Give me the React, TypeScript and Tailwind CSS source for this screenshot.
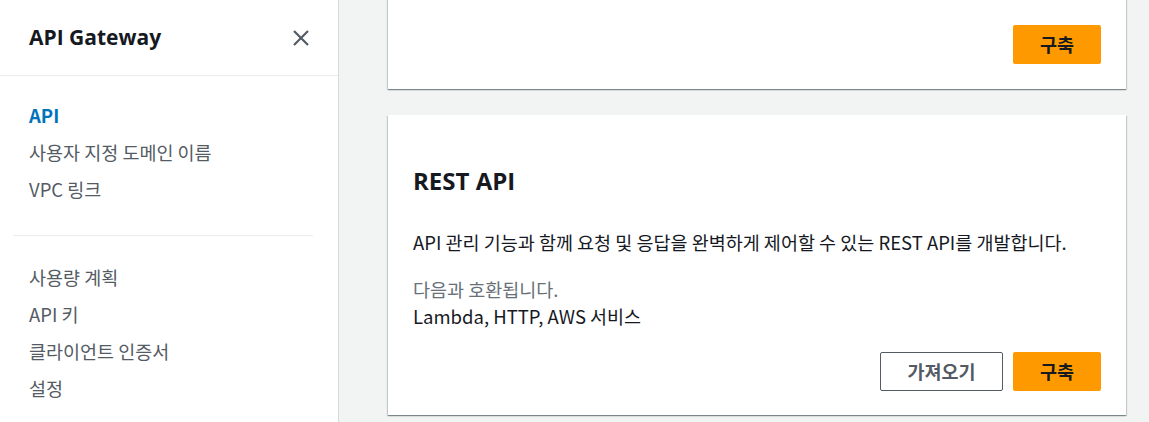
const latin = { fontFamily: '"Open Sans", "Noto Sans CJK KR", sans-serif' };
const kr = { fontFamily: '"Noto Sans CJK KR", "Open Sans", sans-serif' };

const cardShadow =
  "shadow-[0_1px_1px_0_rgba(0,28,36,0.3),1px_1px_1px_0_rgba(0,28,36,0.15),-1px_1px_1px_0_rgba(0,28,36,0.15)]";

function NavItem({ label, active }: { label: string; active?: boolean }) {
  return (
    <a
      href="#"
      style={kr}
      className={
        active
          ? "block h-[37px] leading-[37px] text-[18.5px] font-bold text-[#0073bb]"
          : "block h-[37px] leading-[37px] text-[18.5px] text-[#545b64]"
      }
    >
      {label}
    </a>
  );
}

export default function App() {
  return (
    <div className="flex h-[422px] w-[1149px] overflow-hidden bg-[#f2f3f3]" style={kr}>
      <aside className="w-[339px] shrink-0 border-r border-[#d5dbdb] bg-white">
        <div className="flex h-[76px] items-center justify-between border-b border-[#eaeded] pl-[29px] pr-[28px]">
          <h1 style={latin} className="text-[21px] font-bold text-[#16191f]">
            API Gateway
          </h1>
          <svg width="18" height="18" viewBox="0 0 18 18" className="text-[#545b64]">
            <path d="M2 2 L16 16 M16 2 L2 16" stroke="currentColor" strokeWidth="2.2" />
          </svg>
        </div>
        <nav className="pl-[29px] pt-[21px]">
          <NavItem label="API" active />
          <NavItem label="사용자 지정 도메인 이름" />
          <NavItem label="VPC 링크" />
        </nav>
        <div className="mx-[13px] mt-[27px] mr-[25px] border-t border-[#eaeded]" />
        <nav className="pl-[29px] pt-[23px]">
          <NavItem label="사용량 계획" />
          <NavItem label="API 키" />
          <NavItem label="클라이언트 인증서" />
          <NavItem label="설정" />
        </nav>
      </aside>

      <main className="flex-1 pl-[49px] pr-[23px]">
        <section className={`-mt-[10px] flex h-[99px] items-end justify-end bg-white px-[25px] pb-[25px] ${cardShadow}`}>
          <button className="h-[39px] w-[88px] rounded-[2px] bg-[#ff9900] text-[18.5px] font-bold text-[#16191f]">
            구축
          </button>
        </section>

        <section className={`mt-[26px] bg-white px-[25px] pt-[50px] pb-[24px] ${cardShadow}`}>
          <h2 style={latin} className="text-[24px] leading-[32px] font-bold text-[#16191f]">
            REST API
          </h2>
          <p className="mt-[34px] text-[18.5px] leading-[22px] text-[#16191f]">
            API 관리 기능과 함께 요청 및 응답을 완벽하게 제어할 수 있는 REST API를 개발합니다.
          </p>
          <p className="mt-[25px] text-[18.5px] leading-[22px] text-[#687078]">다음과 호환됩니다.</p>
          <p className="mt-[5px] text-[18.5px] leading-[22px] text-[#16191f]">Lambda, HTTP, AWS 서비스</p>
          <div className="mt-[25px] flex justify-end gap-[10px]">
            <button className="h-[39px] w-[123px] rounded-[2px] border border-[#545b64] bg-white text-[18.5px] font-bold text-[#545b64]">
              가져오기
            </button>
            <button className="h-[39px] w-[88px] rounded-[2px] bg-[#ff9900] text-[18.5px] font-bold text-[#16191f]">
              구축
            </button>
          </div>
        </section>
      </main>
    </div>
  );
}
